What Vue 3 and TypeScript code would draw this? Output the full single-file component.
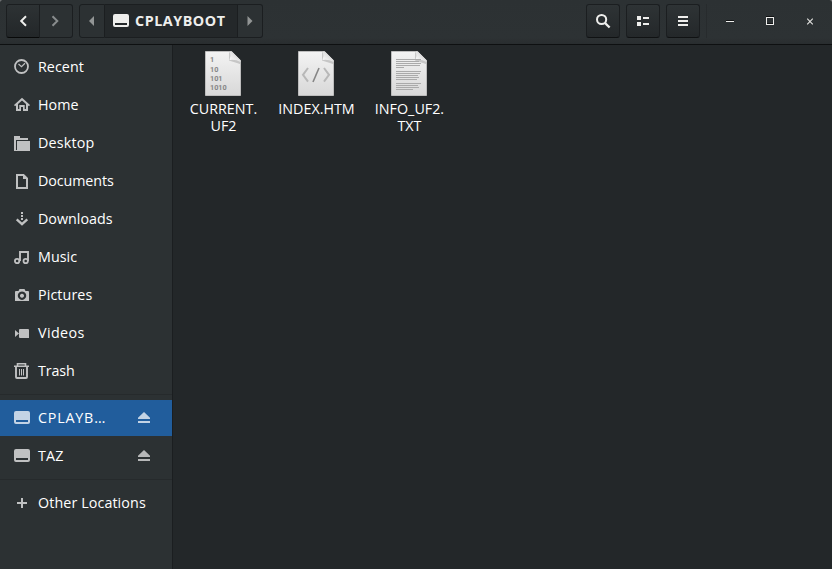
<script setup lang="ts">
interface Place {
  id: string
  label: string
  icon: string
  spacing: number
  selected?: boolean
  ejectable?: boolean
}

const groups: Place[][] = [
  [
    { id: 'recent', label: 'Recent', icon: 'recent', spacing: 0.05 },
    { id: 'home', label: 'Home', icon: 'home', spacing: 0 },
    { id: 'desktop', label: 'Desktop', icon: 'desktop', spacing: 0.2 },
    { id: 'documents', label: 'Documents', icon: 'documents', spacing: -0.1 },
    { id: 'downloads', label: 'Downloads', icon: 'downloads', spacing: 0 },
    { id: 'music', label: 'Music', icon: 'music', spacing: 0.05 },
    { id: 'pictures', label: 'Pictures', icon: 'pictures', spacing: 0.1 },
    { id: 'videos', label: 'Videos', icon: 'videos', spacing: 0.4 },
    { id: 'trash', label: 'Trash', icon: 'trash', spacing: -0.1 },
  ],
  [
    { id: 'cplayboot', label: 'CPLAYB…', icon: 'drive', spacing: 0.8, selected: true, ejectable: true },
    { id: 'taz', label: 'TAZ', icon: 'drive', spacing: 0.2, ejectable: true },
  ],
  [{ id: 'other', label: 'Other Locations', icon: 'plus', spacing: 0.1 }],
]

interface FileEntry {
  kind: string
  name: string
}

const files: FileEntry[] = [
  { kind: 'binary', name: 'CURRENT.\nUF2' },
  { kind: 'html', name: 'INDEX.HTM' },
  { kind: 'text', name: 'INFO_UF2.\nTXT' },
]

const textLines: number[][] = [
  [9.5, 25], [11.5, 23], [13.5, 25], [15.5, 24], [17.5, 8],
  [21.5, 25], [23.5, 24], [25.5, 22], [27.5, 23], [29.5, 21],
  [33.5, 25], [35.5, 22], [37.5, 23], [39.5, 17],
]
</script>

<template>
  <div class="window">
    <header class="headerbar">
      <div class="linked nav">
        <button class="btn back" aria-label="Back">
          <svg width="16" height="16" viewBox="0 0 16 16"><path d="M11 3.200 6.200 8l4.800 4.800" fill="none" stroke="#eeeeec" stroke-width="2" /></svg>
        </button>
        <button class="btn forward" aria-label="Forward">
          <svg width="16" height="16" viewBox="0 0 16 16"><path d="M4.500 3.200l4.800 4.800-4.800 4.800" fill="none" stroke="#888c8d" stroke-width="2" /></svg>
        </button>
      </div>
      <div class="linked path">
        <button class="btn step" aria-label="Scroll left">
          <svg width="6" height="10" viewBox="0 0 6 10"><path d="M5 0v10L0 5z" fill="#929595" /></svg>
        </button>
        <button class="btn crumb">
          <svg width="16" height="16" viewBox="0 0 16 16"><path fill="#eeeeec" fill-rule="evenodd" d="M2 1h12q2 0 2 2v9q0 2-2 2H2q-2 0-2-2V3q0-2 2-2zM2 10v2h12v-2z" /></svg>
          <span>CPLAYBOOT</span>
        </button>
        <button class="btn step next" aria-label="Scroll right">
          <svg width="6" height="10" viewBox="0 0 6 10"><path d="M.5 0v10l5-5z" fill="#929595" /></svg>
        </button>
      </div>
      <div class="tools">
        <button class="btn tool" aria-label="Search">
          <svg width="16" height="16" viewBox="0 0 16 16"><g fill="none" stroke="#eeeeec"><circle cx="6.6" cy="6.5" r="4.6" stroke-width="2" /><path d="M10 10l4.6 4.5" stroke-width="2.4" /></g></svg>
        </button>
        <button class="btn tool" aria-label="View">
          <svg width="16" height="16" viewBox="0 0 16 16"><path fill="#eeeeec" d="M2 3h4v4H2zM2 9h4v4H2zM8 4h6v2H8zM8 10h6v2H8z" /></svg>
        </button>
        <button class="btn tool" aria-label="Menu">
          <svg width="16" height="16" viewBox="0 0 16 16"><path fill="#eeeeec" d="M3 3h10v2H3zM3 7h10v2H3zM3 11h10v2H3z" /></svg>
        </button>
      </div>
      <div class="controls">
        <svg width="16" height="16" viewBox="0 0 16 16"><path fill="#111314" d="M4 7h8v1H4z" /><path fill="#eeeeec" d="M4 8h8v1H4z" /></svg>
        <svg width="16" height="16" viewBox="0 0 16 16"><path fill="#111314" d="M4 3h8v1H4zM5 10h6v1H5z" /><path fill="#eeeeec" fill-rule="evenodd" d="M4 4h8v8H4zM5 5v6h6V5z" /></svg>
        <svg width="16" height="16" viewBox="0 0 16 16"><path stroke="#dddddb" stroke-width="1.200" d="M5.200 5.700l5.600 5.600M10.800 5.700l-5.600 5.600" /></svg>
      </div>
    </header>

    <div class="body">
      <nav class="sidebar">
        <ul v-for="(group, g) in groups" :key="g" class="group">
          <li v-for="place in group" :key="place.id" class="place" :class="{ selected: place.selected }">
            <svg class="icon" width="16" height="16" viewBox="0 0 16 16">
              <g v-if="place.icon === 'recent'" fill="none" stroke="currentColor">
                <circle cx="7.500" cy="7.500" r="6.500" stroke-width="1.800" /><path d="M4.500 5l3 2.600L11 4.300" stroke-width="1.200" />
              </g>
              <path v-else-if="place.icon === 'home'" fill="currentColor" d="M8 .8 16 8l-1 1.200-1-.8V14H9v-4H7v4H2V8.400L1 9.200 0 8zM8 3.600 4 7.100V12h1.300V8h5.400v4H12V7.100z" />
              <path v-else-if="place.icon === 'desktop'" fill="currentColor" d="M0 1h6v2h8v2H2v11H0zM3 6h13v10H3zM0 15h3v1H0z" />
              <g v-else-if="place.icon === 'documents'">
                <path fill="none" stroke="currentColor" stroke-width="2" d="M3 2h6.500l3.500 3.500V15H3z" />
                <path fill="currentColor" d="M9 2v4h4z" />
              </g>
              <g v-else-if="place.icon === 'downloads'">
                <path fill="currentColor" d="M7 1h2v2H7zM7 4h2v2H7zM7 7h2v2H7z" />
                <path fill="none" stroke="currentColor" stroke-width="2.300" d="M2.700 8.300 8 13.200l5.300-4.900" />
              </g>
              <g v-else-if="place.icon === 'music'" fill="none" stroke="currentColor">
                <circle cx="3.100" cy="12" r="2.200" stroke-width="1.800" /><circle cx="11.700" cy="12" r="2.200" stroke-width="1.800" />
                <path d="M6 12V3h8v9" stroke-width="1.900" />
              </g>
              <path v-else-if="place.icon === 'pictures'" fill="currentColor" fill-rule="evenodd" d="M5.500 2h5l1 2H14q1 0 1 1v9H1V5q0-1 1-1h2.500zM8 4.500a4.200 4.200 0 1 0 .01 0zM8 6.700a2 2 0 1 1-.01 0z" />
              <path v-else-if="place.icon === 'videos'" fill="currentColor" d="M1 5l4 3.500L1 12zM6 4h8q1 0 1 1v8H6q-1 0-1-1V5q0-1 1-1z" />
              <g v-else-if="place.icon === 'trash'" fill="none" stroke="currentColor">
                <path d="M0 3.200h15M3.500 3V.8h8V3" stroke-width="1.600" /><path d="M2 4v10q0 1 1 1h9q1 0 1-1V4" stroke-width="1.900" /><path d="M5.500 6v6.500M7.500 6v6.500M9.500 6v6.500" />
              </g>
              <path v-else-if="place.icon === 'drive'" fill="currentColor" fill-rule="evenodd" d="M2 1h12q2 0 2 2v9q0 2-2 2H2q-2 0-2-2V3q0-2 2-2zM2 10v2h12v-2z" />
              <path v-else fill="currentColor" d="M7 3h2v4h4v2H9v4H7V9H3V7h4z" />
            </svg>
            <span class="label" :style="{ letterSpacing: place.spacing + 'px' }">{{ place.label }}</span>
            <svg v-if="place.ejectable" class="eject" width="16" height="16" viewBox="0 0 16 16">
              <path fill="currentColor" d="M8 2l6 5.700V9H2V7.700zM2 11h12v2H2z" />
            </svg>
          </li>
        </ul>
      </nav>

      <main class="files">
        <figure v-for="file in files" :key="file.kind" class="file">
          <svg class="thumb" width="38" height="48" viewBox="0 0 38 48">
            <defs>
              <linearGradient :id="'paper-' + file.kind" x1="0" y1="0" x2="0" y2="1">
                <stop offset="0" stop-color="#f3f3f3" /><stop offset="1" stop-color="#d8d8d8" />
              </linearGradient>
              <linearGradient :id="'fold-' + file.kind" x1="0" y1="1" x2="1" y2="0">
                <stop offset="0" stop-color="#ffffff" /><stop offset=".5" stop-color="#e4e4e4" /><stop offset="1" stop-color="#aaa" />
              </linearGradient>
            </defs>
            <path :fill="'url(#paper-' + file.kind + ')'" stroke="#bdbdbd" d="M1.500 1.500h26l9 9v35h-35z" />
            <path fill="#a0a0a0" opacity=".5" d="M25 2v8.500L36 14v-3z" />
            <path :fill="'url(#fold-' + file.kind + ')'" d="M26 1.500q1 4-.5 8.500 6-1 11 2v-2L28 1.500z" />
            <g v-if="file.kind === 'binary'" class="bits">
              <text x="6" y="12">1</text><text x="6" y="21.500">10</text><text x="6" y="30.500">101</text><text x="6" y="39.500">1010</text>
            </g>
            <g v-else-if="file.kind === 'html'" fill="none" stroke-width="2">
              <path stroke="#b8b8b8" d="M11 18l-5 6.800 5 6.800M27 18l5 6.800-5 6.800" /><path stroke="#858585" stroke-width="1.600" d="M22 18l-6 14" />
            </g>
            <g v-else stroke="#aaa" stroke-width="1">
              <path v-for="line in textLines" :key="line[0]" :d="`M6 ${line[0]}h${line[1]}`" />
            </g>
          </svg>
          <figcaption>{{ file.name }}</figcaption>
        </figure>
      </main>
    </div>
  </div>
</template>

<style>
body {
  background: #6b6e70;
}
</style>

<style scoped>
* {
  box-sizing: border-box;
}
.window {
  width: 832px;
  height: 569px;
  display: flex;
  flex-direction: column;
  overflow: hidden;
  border-radius: 4px 4px 0 0;
  background: #232729;
  color: #fff;
  font: 14.3px/17px "Open Sans", "Noto Sans", sans-serif;
}
svg {
  display: block;
  flex: none;
}
.headerbar {
  flex: none;
  display: flex;
  height: 45px;
  padding: 4px 14px 6px 6px;
  border-bottom: 1px solid #0e1011;
  background: linear-gradient(#2c3133, #2d3234 85%, #292d2f);
}
.btn {
  display: flex;
  align-items: center;
  justify-content: center;
  height: 34px;
  margin: 0;
  padding: 0;
  border: 1px solid #1b1e20;
  background: #2c3133;
  color: #eeeeec;
  font: inherit;
}
.linked {
  display: flex;
}
.linked .btn:first-child {
  border-radius: 3px 0 0 3px;
}
.linked .btn:last-child {
  border-radius: 0 3px 3px 0;
}
.linked .btn + .btn {
  border-left: 0;
}
.back {
  width: 34px;
  border-bottom-color: #080909;
  background: linear-gradient(#2d3234, #232729);
}
.forward {
  width: 33px;
}
.path {
  margin-left: 6px;
}
.step {
  width: 26px;
}
.next {
  width: 25px;
}
.linked .crumb {
  width: 133px;
  gap: 6px;
  justify-content: flex-start;
  padding-left: 8px;
  background: #24282a;
  font-weight: 700;
  letter-spacing: 0.55px;
}
.crumb span {
  padding-bottom: 2px;
}
.tools {
  display: flex;
  gap: 6px;
  margin-left: auto;
}
.tool {
  width: 34px;
  border-radius: 3px;
  border-bottom-color: #101213;
  background: linear-gradient(#2e3335, #24282a);
}
.controls {
  display: flex;
  align-items: center;
  gap: 24px;
  margin-left: 6px;
  padding-left: 15px;
  border-left: 1px solid #272b2d;
}
.body {
  flex: 1;
  display: flex;
  min-height: 0;
}
.sidebar {
  flex: none;
  width: 173px;
  padding-top: 4px;
  border-right: 1px solid #1b1e20;
  background: #2c3133;
}
.group {
  display: flex;
  flex-direction: column;
  gap: 2px;
  margin: 0;
  padding: 0;
  list-style: none;
}
.group + .group {
  margin-top: 5px;
  padding-top: 5px;
  border-top: 1px solid #262a2c;
}
.place {
  display: flex;
  align-items: center;
  height: 36px;
  padding: 0 20px 0 14px;
}
.icon {
  margin-right: 8px;
  color: #c0c1c2;
}
.label {
  padding-bottom: 2px;
  white-space: nowrap;
}
.eject {
  margin-left: auto;
  color: #b7b8b9;
}
.selected {
  background: #215d9c;
}
.selected .icon,
.selected .eject {
  color: #c3d3e5;
}
.files {
  flex: 1;
  display: flex;
  align-items: flex-start;
  gap: 13px;
  padding: 5px 0 0 10px;
}
.file {
  display: flex;
  flex-direction: column;
  align-items: center;
  width: 80px;
  margin: 0;
}
figcaption {
  margin-top: 2px;
  padding-left: 1px;
  text-align: center;
  white-space: pre;
}
.bits {
  fill: #858585;
  font: 700 7.300px Roboto, sans-serif;
}
</style>
